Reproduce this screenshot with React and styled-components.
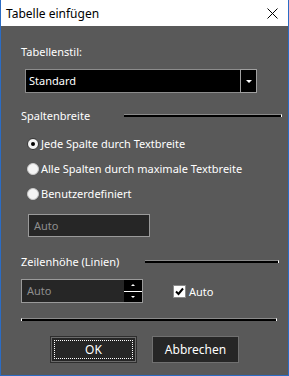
import React from 'react'
import styled, { createGlobalStyle } from 'styled-components'

const Global = createGlobalStyle`
html, body {
    margin: 0;
    padding: 0;
    background: #ffffff;
}
* {
    box-sizing: border-box;
}
`

const Win = styled.div`
width: 289px;
height: 376px;
display: flex;
flex-direction: column;
border: 1px solid #2b6cc4;
border-top: none;
font-family: "Noto Sans", "Open Sans", sans-serif;
font-size: 11px;
`

const TitleBar = styled.div`
height: 26px;
flex: none;
background: #ffffff;
display: flex;
align-items: center;
justify-content: space-between;
padding: 0 10px 0 5px;
color: #000;
`

const TitleText = styled.span`
font-size: 12px;
`

const Body = styled.div`
flex: 1;
background: #595959;
color: #ffffff;
padding: 18px 0 0 20px;
display: flex;
flex-direction: column;
`

const Label = styled.div`
height: 16px;
line-height: 16px;
margin-top: ${p => p.mt || 0}px;
`

const GroupHead = styled.div`
height: 16px;
display: flex;
align-items: center;
margin-top: ${p => p.mt || 0}px;
padding-right: ${p => p.pr}px;
`

const HeadLine = styled.div`
margin-left: ${p => p.gap}px;
flex: 1;
height: 3px;
background: #000;
border-top: 1px solid #8a8a8a;
border-right: 1px solid #fff;
`

const Combo = styled.div`
margin: 9px 0 0 4px;
width: 232px;
height: 24px;
display: flex;
`

const ComboField = styled.div`
flex: 1;
background: #000;
border: 1px solid #8c8c8c;
border-right: none;
padding-left: 3px;
line-height: 21px;
`

const DropBtn = styled.div`
width: 17px;
background: #000;
border: 1px solid #a0a0a0;
display: flex;
align-items: center;
justify-content: center;
`

const Tri = styled.div`
width: 0;
height: 0;
border-left: ${p => p.w}px solid transparent;
border-right: ${p => p.w}px solid transparent;
${p => p.up ? 'border-bottom' : 'border-top'}: ${p => p.h}px solid #fff;
`

const RadioList = styled.div`
margin: 8px 0 0 6px;
display: flex;
flex-direction: column;
`

const RadioRow = styled.div`
height: 25px;
display: flex;
align-items: center;
gap: 2px;
`

const RadioDot = styled.div`
width: 12px;
height: 12px;
border-radius: 50%;
background: #f4f4f4;
border: 1px solid ${p => p.on ? '#333' : '#c8c8c8'};
display: flex;
align-items: center;
justify-content: center;
&::after {
    content: '';
    width: 4px;
    height: 4px;
    border-radius: 50%;
    background: ${p => p.on ? '#000' : 'transparent'};
}
`

const TextBox = styled.div`
width: ${p => p.w}px;
height: ${p => p.h}px;
margin: ${p => p.m};
background: #262626;
border: 1px solid #9a9a9a;
color: #8e8e8e;
padding-left: 5px;
line-height: ${p => p.h - 2}px;
`

const SpinRow = styled.div`
margin-top: 10px;
display: flex;
align-items: center;
`

const Spinner = styled.div`
width: 122px;
height: 24px;
display: flex;
background: #262626;
border: 1px solid #9a9a9a;
color: #8e8e8e;
`

const SpinText = styled.div`
flex: 1;
padding-left: 5px;
line-height: 22px;
`

const SpinBtns = styled.div`
width: 18px;
display: flex;
flex-direction: column;
background: #fff;
gap: 1px;
`

const SpinBtn = styled.div`
flex: 1;
background: #000;
display: flex;
align-items: center;
justify-content: center;
`

const Check = styled.label`
margin-left: 30px;
display: flex;
align-items: center;
gap: 3px;
color: #fff;
`

const Box = styled.div`
width: 13px;
height: 13px;
background: #fff;
border: 1px solid #8a8a8a;
display: flex;
align-items: center;
justify-content: center;
`

const Sep = styled.div`
margin: 15px 11px 0 0;
height: 3px;
background: #000;
border-top: 1px solid #8a8a8a;
border-right: 1px solid #fff;
border-left: 1px solid #fff;
`

const Buttons = styled.div`
margin: 15px 0 0 29px;
display: flex;
gap: 15px;
`

const Btn = styled.div`
width: 87px;
height: 27px;
background: #262626;
border: 1px solid ${p => p.primary ? '#2e2e2e' : '#707070'};
box-shadow: ${p => p.primary ? 'inset 0 0 0 1px #6a6a6a' : 'none'};
display: flex;
align-items: center;
justify-content: center;
position: relative;
color: #fff;
font-size: 12px;
&::after {
    content: '';
    display: ${p => p.primary ? 'block' : 'none'};
    position: absolute;
    inset: 3px;
    border: 1px dotted #fff;
}
`

const App = () => {
    const radios = [
        ['Jede Spalte durch Textbreite', true],
        ['Alle Spalten durch maximale Textbreite', false],
        ['Benutzerdefiniert', false],
    ]

    return (
        <Win>
            <Global />
            <TitleBar>
                <TitleText>Tabelle einfügen</TitleText>
                <svg width="11" height="11" viewBox="0 0 11 11">
                    <path d="M0.5 0.5 L10.5 10.5 M10.5 0.5 L0.5 10.5" stroke="#000" strokeWidth="1" />
                </svg>
            </TitleBar>
            <Body>
                <Label>Tabellenstil:</Label>
                <Combo>
                    <ComboField>Standard</ComboField>
                    <DropBtn><Tri w={3} h={3} /></DropBtn>
                </Combo>
                <GroupHead mt={14} pr={6}>
                    Spaltenbreite
                    <HeadLine gap={34} />
                </GroupHead>
                <RadioList>
                    {radios.map(([text, on]) => (
                        <RadioRow key={text}>
                            <RadioDot on={on} />
                            {text}
                        </RadioRow>
                    ))}
                </RadioList>
                <TextBox w={122} h={23} m="8px 0 0 7px">Auto</TextBox>
                <GroupHead mt={16} pr={9}>
                    Zeilenhöhe (Linien)
                    <HeadLine gap={26} />
                </GroupHead>
                <SpinRow>
                    <Spinner>
                        <SpinText>Auto</SpinText>
                        <SpinBtns>
                            <SpinBtn><Tri up w={2} h={2} /></SpinBtn>
                            <SpinBtn><Tri w={2} h={2} /></SpinBtn>
                        </SpinBtns>
                    </Spinner>
                    <Check>
                        <Box>
                            <svg width="9" height="9" viewBox="0 0 9 9">
                                <path d="M1 4.5 L3.5 7 L8 1.5" stroke="#000" strokeWidth="2" fill="none" />
                            </svg>
                        </Box>
                        Auto
                    </Check>
                </SpinRow>
                <Sep />
                <Buttons>
                    <Btn primary>OK</Btn>
                    <Btn>Abbrechen</Btn>
                </Buttons>
            </Body>
        </Win>
    )
}

export default App
